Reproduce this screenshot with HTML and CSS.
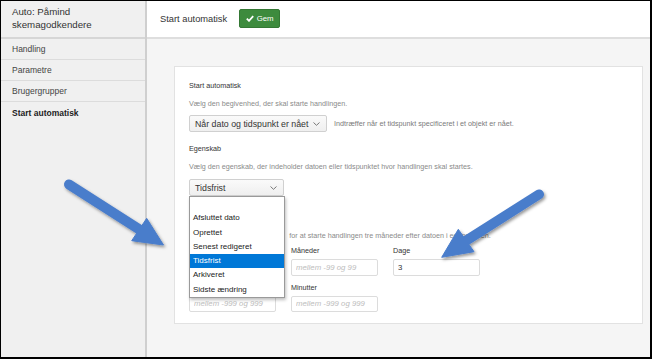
FILE: index.html
```html
<!DOCTYPE html>
<html lang="da">
<head>
    <meta charset="UTF-8">
    <title>Start automatisk</title>
    <link rel="stylesheet" href="styles.css">
</head>
<body>
    <div class="window">
        <aside class="sidebar">
            <div class="side-head">Auto: Påmind<br>skemagodkendere</div>
            <nav class="side-nav">
                <a class="side-item">Handling</a>
                <a class="side-item">Parametre</a>
                <a class="side-item">Brugergrupper</a>
                <a class="side-item active">Start automatisk</a>
            </nav>
        </aside>

        <main class="main">
            <header class="topbar">
                <h1>Start automatisk</h1>
                <button class="btn-save">
                    <svg width="8" height="7" viewBox="0 0 8 7"><path d="M0.8 3.6 L3 5.8 L7.2 1.2" fill="none" stroke="#fff" stroke-width="1.8"/></svg>
                    Gem
                </button>
            </header>

            <div class="content">
                <section class="card">
                    <div class="field-title">Start automatisk</div>
                    <p class="field-desc">Vælg den begivenhed, der skal starte handlingen.</p>
                    <div class="select-row">
                        <div class="select select-event">
                            <span>Når dato og tidspunkt er nået</span>
                            <svg width="7" height="4" viewBox="0 0 7 4"><path d="M0.5 0.5 L3.5 3.3 L6.5 0.5" fill="none" stroke="#777" stroke-width="1"/></svg>
                        </div>
                        <span class="hint">Indtræffer når et tidspunkt specificeret i et objekt er nået.</span>
                    </div>

                    <div class="field-title second">Egenskab</div>
                    <p class="field-desc">Vælg den egenskab, der indeholder datoen eller tidspunktet hvor handlingen skal startes.</p>
                    <div class="select-wrap">
                        <div class="select select-prop">
                            <span>Tidsfrist</span>
                            <svg width="7" height="4" viewBox="0 0 7 4"><path d="M0.5 0.5 L3.5 3.3 L6.5 0.5" fill="none" stroke="#777" stroke-width="1"/></svg>
                        </div>
                        <ul class="dropdown">
                            <li>&nbsp;</li>
                            <li>Afsluttet dato</li>
                            <li>Oprettet</li>
                            <li>Senest redigeret</li>
                            <li class="selected">Tidsfrist</li>
                            <li>Arkiveret</li>
                            <li>Sidste ændring</li>
                        </ul>
                    </div>

                    <div class="field-title third covered">Forskydning</div>
                    <p class="field-desc"><span class="covered">Indtast f.eks. 3 i feltet Måneder </span>for at starte handlingen tre måneder efter datoen i egenskaben.</p>
                    <div class="offset-grid">
                        <label class="offset-field"><span class="covered">År</span><input type="text" placeholder="mellem -9 og 9"></label>
                        <label class="offset-field"><span>Måneder</span><input type="text" placeholder="mellem -99 og 99"></label>
                        <label class="offset-field"><span>Dage</span><input type="text" value="3"></label>
                        <label class="offset-field"><span class="covered">Timer</span><input type="text" placeholder="mellem -999 og 999"></label>
                        <label class="offset-field"><span>Minutter</span><input type="text" placeholder="mellem -999 og 999"></label>
                    </div>
                </section>
            </div>
        </main>

        <svg class="arrows" width="652" height="359" viewBox="0 0 652 359">
            <defs>
                <filter id="shadow" x="-20%" y="-20%" width="140%" height="140%">
                    <feDropShadow dx="1.5" dy="2" stdDeviation="1.5" flood-color="#000" flood-opacity="0.4"/>
                </filter>
            </defs>
            <g fill="#4a7dcb" stroke="#4a7dcb" filter="url(#shadow)">
                <line x1="69" y1="184.5" x2="141" y2="230.5" stroke-width="10" stroke-linecap="round"/>
                <polygon points="146.7,218.3 131.7,240.7 163.5,245" stroke-width="1" stroke-linejoin="round"/>
                <line x1="539" y1="194.4" x2="464" y2="242" stroke-width="10" stroke-linecap="round"/>
                <polygon points="458.3,229.3 474,251.7 441.7,257.3" stroke-width="1" stroke-linejoin="round"/>
            </g>
        </svg>
    </div>
</body>
</html>
```

FILE: styles.css
```css
:root {
    --side-bg: #f0f0f0;
    --main-bg: #f5f5f5;
    --line: #dcdcdc;
    --text: #333;
    --muted: #8a8a8a;
    --green: #3d8b3d;
    --blue: #0078d7;
}

* {
    margin: 0;
    padding: 0;
    box-sizing: border-box;
}

body {
    font-family: "Liberation Sans", Arial, sans-serif;
    color: var(--text);
    width: 652px;
    height: 359px;
    overflow: hidden;
}

.window {
    position: relative;
    display: flex;
    width: 652px;
    height: 359px;
    border-style: solid;
    border-color: #000;
    border-width: 1px 2px 2px 1px;
    background: var(--main-bg);
}

/* sidebar */

.sidebar {
    width: 146px;
    flex-shrink: 0;
    background: var(--side-bg);
    border-right: 2px solid #cfcfcf;
}

.side-head {
    height: 38px;
    padding: 5px 11px 0;
    font-size: 9.7px;
    line-height: 12.8px;
    color: #333;
    border-bottom: 2px solid #d6d6d6;
}

.side-nav {
    display: flex;
    flex-direction: column;
}

.side-item {
    height: 21px;
    padding: 0 11px;
    display: flex;
    align-items: center;
    font-size: 8.5px;
    color: #444;
    border-bottom: 1px solid var(--line);
}

.side-item.active {
    font-weight: 700;
    color: #222;
    border-bottom: none;
}

/* main */

.main {
    flex: 1;
    display: flex;
    flex-direction: column;
}

.topbar {
    height: 38px;
    flex-shrink: 0;
    background: #fff;
    border-bottom: 2px solid #dedede;
    display: flex;
    align-items: center;
    padding: 0 0 1px 13px;
    gap: 12px;
}

.topbar h1 {
    font-size: 9.3px;
    font-weight: 400;
    color: #333;
}

.btn-save {
    width: 41px;
    height: 19px;
    display: flex;
    align-items: center;
    justify-content: center;
    gap: 3px;
    background: var(--green);
    border: 1px solid #347834;
    border-radius: 2px;
    color: #fff;
    font-family: "Liberation Sans", Arial, sans-serif;
    font-size: 7.8px;
}

.content {
    padding: 27px 7px 0 27px;
}

.card {
    height: 258px;
    background: #fff;
    border: 1px solid #e2e2e2;
    padding: 14px 14px 0;
}

.field-title {
    font-size: 7.2px;
    line-height: 10px;
    color: #333;
}

.field-title.second {
    margin-top: 12px;
}

.field-title.third {
    margin-top: 17px;
}

.field-desc {
    margin-top: 8px;
    font-size: 7.2px;
    line-height: 10px;
    color: var(--muted);
}

/* text that lies under the open list */
.covered {
    visibility: hidden;
}

/* selects */

.select-row {
    display: flex;
    align-items: center;
    gap: 7px;
    margin-top: 6px;
}

.select {
    height: 17px;
    display: flex;
    align-items: center;
    justify-content: space-between;
    padding: 0 6px 0 5px;
    background: linear-gradient(#fafafa, #efefef);
    border: 1px solid #d0d0d0;
    border-radius: 2px;
    font-size: 8.8px;
    color: #333;
}

.select-event {
    width: 138px;
}

.select-prop {
    width: 95px;
}

.hint {
    font-size: 7.2px;
    color: #7a7a7a;
}

.select-wrap {
    position: relative;
    margin-top: 7px;
    width: 95px;
}

.dropdown {
    position: absolute;
    top: 100%;
    left: 0;
    z-index: 5;
    width: 96px;
    list-style: none;
    background: #fff;
    border: 1px solid #9a9a9a;
    box-shadow: 1px 2px 3px rgba(0, 0, 0, 0.25);
}

.dropdown li {
    height: 14.3px;
    line-height: 14.3px;
    padding-left: 3px;
    font-size: 8px;
    color: #222;
}

.dropdown li.selected {
    background: var(--blue);
    color: #fff;
}

/* offset fields */

.offset-grid {
    display: grid;
    grid-template-columns: repeat(3, 87px);
    column-gap: 15px;
    row-gap: 7px;
    margin-top: 5px;
}

.offset-field {
    display: flex;
    flex-direction: column;
    gap: 3px;
}

.offset-field span {
    font-size: 7.2px;
    line-height: 10px;
    color: #333;
}

.offset-field input {
    height: 16.5px;
    width: 100%;
    padding: 0 4px;
    border: 1px solid #dcdcdc;
    border-radius: 2px;
    font-family: "Liberation Sans", Arial, sans-serif;
    font-size: 7.8px;
    color: #333;
    outline: none;
}

.offset-field input::placeholder {
    font-style: italic;
    color: #bdbdbd;
}

/* callout arrows */

.arrows {
    position: absolute;
    top: -1px;
    left: -1px;
    z-index: 10;
    pointer-events: none;
}
```
